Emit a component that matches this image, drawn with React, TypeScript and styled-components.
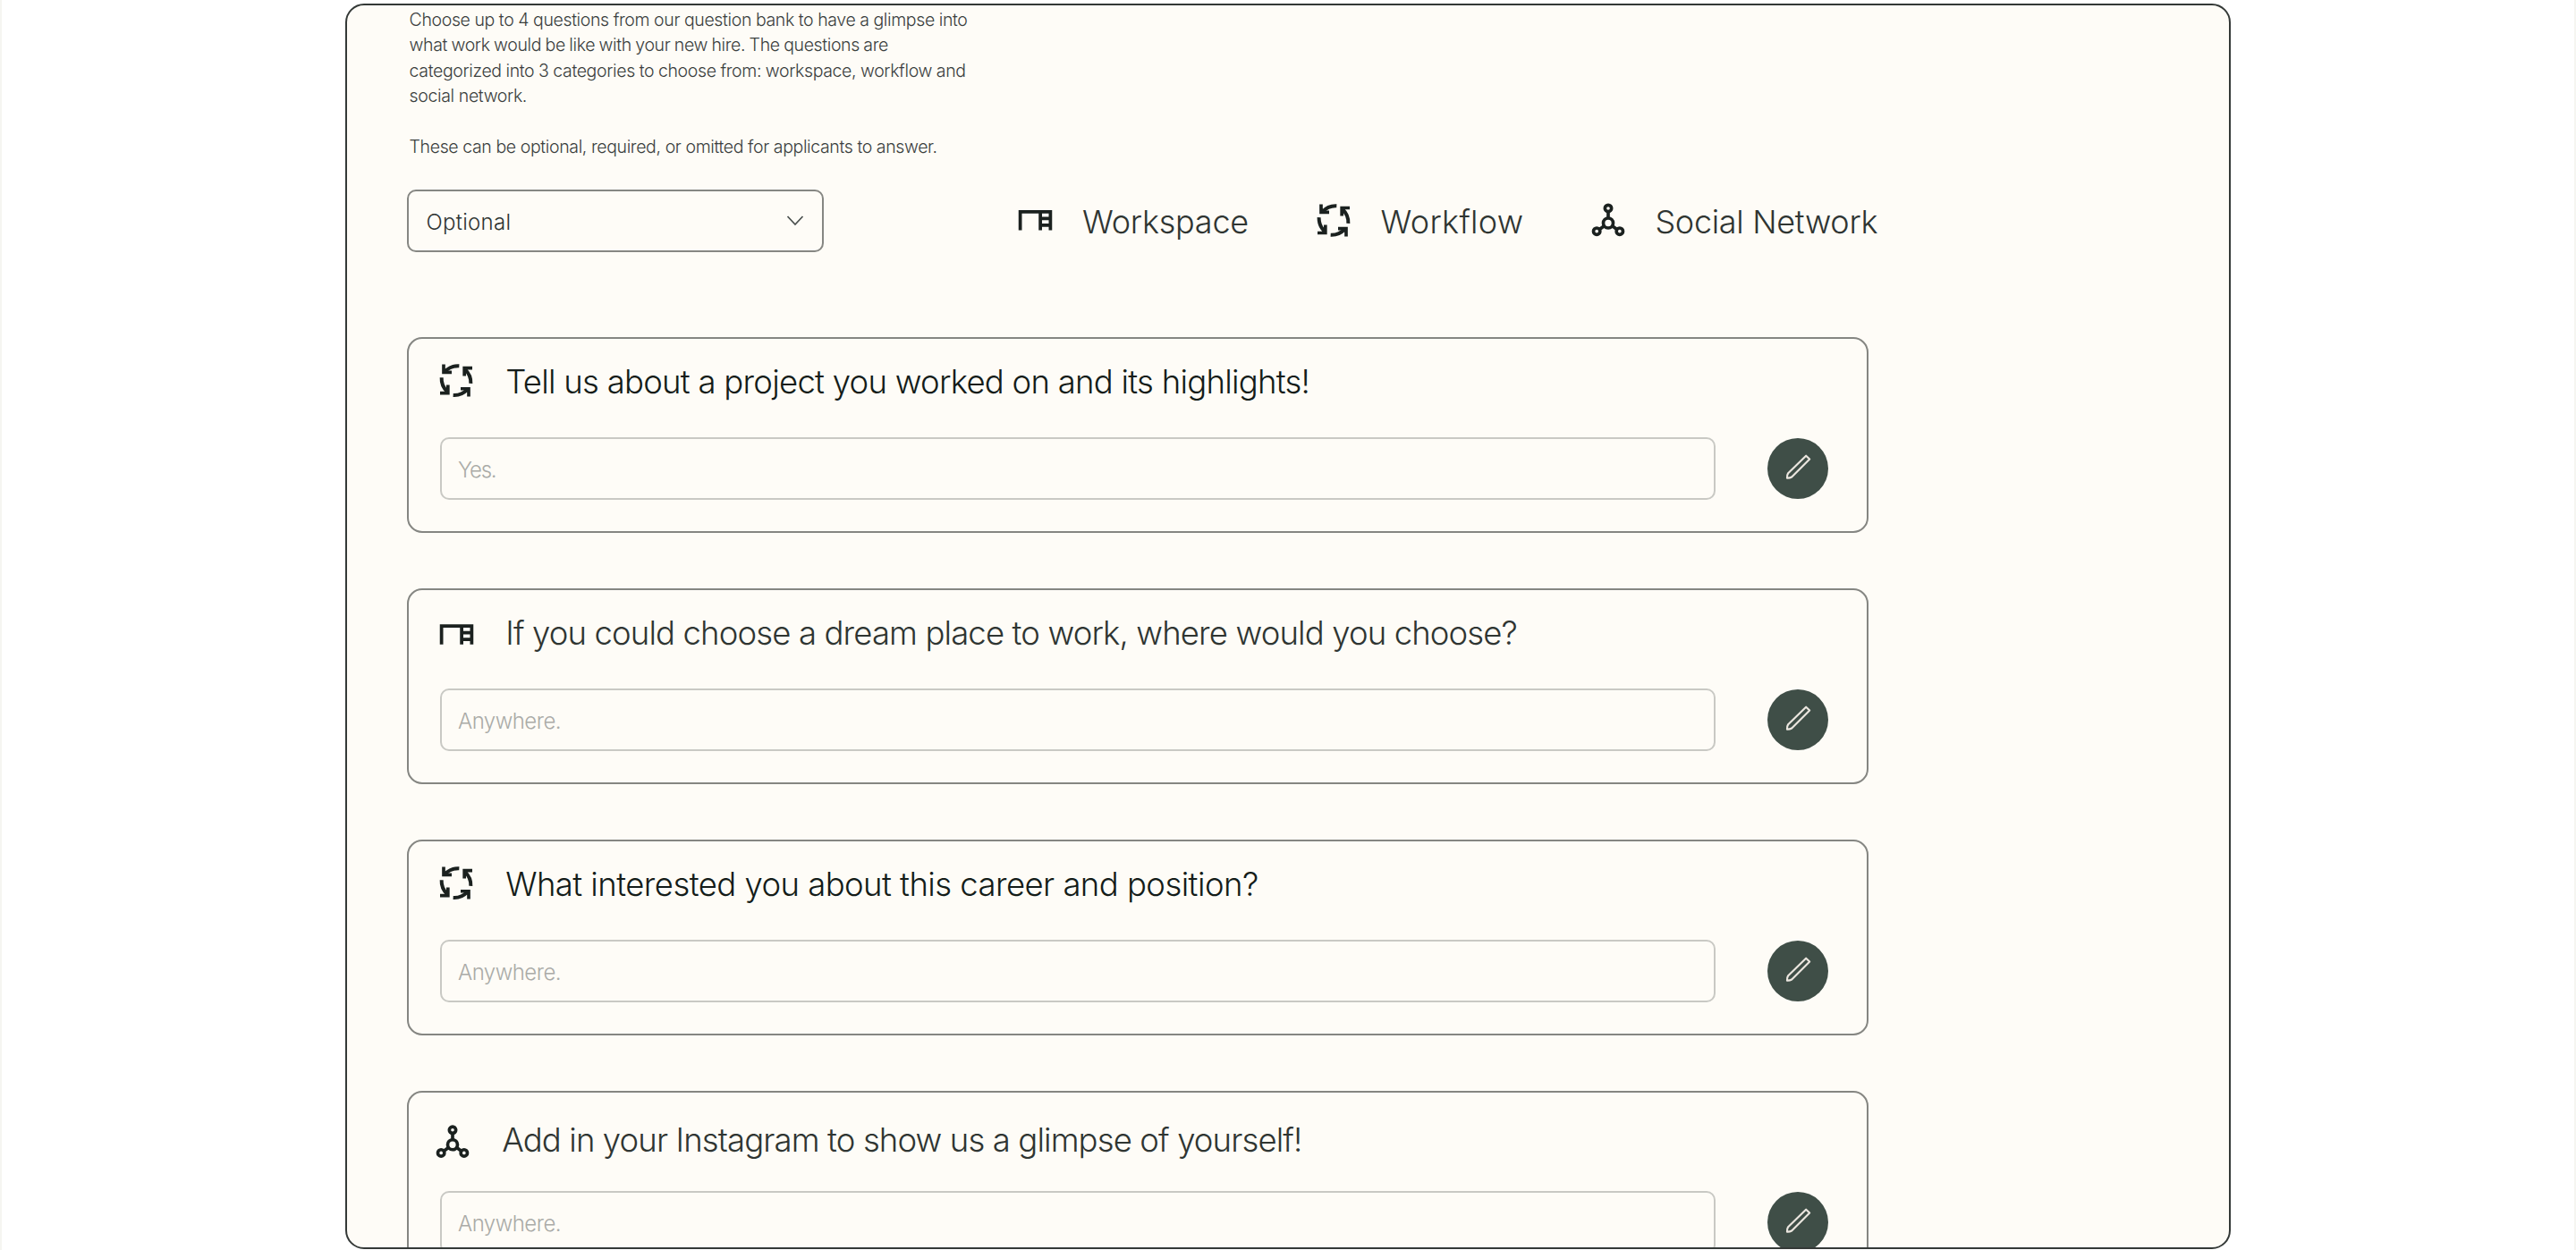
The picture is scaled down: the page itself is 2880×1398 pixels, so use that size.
import React from 'react';
import styled, { createGlobalStyle } from 'styled-components';

const Global = createGlobalStyle`
  * { box-sizing: border-box; }
  html, body { margin: 0; padding: 0; background: #fff; }
  body { overflow: hidden; font-family: Inter, 'Liberation Sans', sans-serif; font-weight: 300; color: #2f3532; }
`;

const Page = styled.div`
  height: 1398px;
  padding: 4px 384px 0 384px;
  border-left: 2px solid #f5f5f1;
  border-right: 2px solid #f5f5f1;
`;

const Frame = styled.main`
  height: 1393px;
  padding: 2px 0 0 67px;
  border: 2px solid #343937;
  border-radius: 21px;
  background: #fefcf7;
  overflow: hidden;
`;

const Intro = styled.div`
  height: 170px;
  padding-left: 2.6px;
  margin-bottom: 34px;
`;

const IntroLine = styled.p<{ $word: number }>`
  margin: 0;
  height: 28.35px;
  font-size: 19.5px;
  line-height: 28.35px;
  letter-spacing: -0.37px;
  word-spacing: ${(p) => p.$word}px;
  white-space: nowrap;
  color: #3b403e;
`;

const Toolbar = styled.div`
  display: flex;
  align-items: center;
  height: 70px;
  margin-bottom: 95px;
`;

const Select = styled.div`
  display: flex;
  align-items: center;
  justify-content: space-between;
  width: 466px;
  height: 70px;
  padding: 2px 20px 0 19.5px;
  border: 2px solid #868783;
  border-radius: 10px;
  font-size: 24px;
  letter-spacing: 0.28px;
`;

const Legend = styled.div`
  display: grid;
  grid-template-columns: 334.3px 306.8px auto;
  margin-left: 213px;
`;

const LegendItem = styled.div<{ $gap: number }>`
  display: flex;
  align-items: center;
  gap: ${(p) => p.$gap}px;
`;

const LegendLabel = styled.span<{ $track: number }>`
  padding-top: 1px;
  font-size: 36px;
  line-height: 44px;
  letter-spacing: ${(p) => p.$track}px;
  white-space: nowrap;
`;

const IconSvg = styled.svg<{ $size: number; $shift: number }>`
  flex: none;
  width: ${(p) => p.$size}px;
  height: ${(p) => p.$size}px;
  margin: ${(p) => (46 - p.$size) / 2}px;
  transform: translateY(${(p) => p.$shift}px);
`;

const Cards = styled.div`
  display: flex;
  flex-direction: column;
  gap: 62px;
  width: 1634px;
`;

const Card = styled.section`
  height: 219px;
  flex: none;
  border: 2px solid #858682;
  border-radius: 17px;
`;

const CardHead = styled.div<{ $low?: boolean }>`
  display: flex;
  align-items: flex-start;
  gap: ${(p) => (p.$low ? 32.7 : 32)}px;
  height: 110px;
  padding: ${(p) => (p.$low ? '30.4px 0 0 25.5px' : '24.7px 0 0 30.2px')};
`;

const Question = styled.h2<{ $track: number; $dark?: boolean }>`
  margin: 0;
  font-size: 36.5px;
  font-weight: 300;
  line-height: 46px;
  letter-spacing: ${(p) => p.$track}px;
  white-space: nowrap;
  color: ${(p) => (p.$dark ? '#141c19' : '#2f3532')};
`;

const CardBody = styled.div`
  display: flex;
  align-items: center;
  gap: 58px;
  padding-left: 35px;
`;

const Field = styled.div<{ $track: number }>`
  display: flex;
  align-items: center;
  width: 1426px;
  height: 70px;
  padding: 2px 0 0 18px;
  border: 2px solid #c9c9c4;
  border-radius: 10px;
  font-size: 24px;
  letter-spacing: ${(p) => p.$track}px;
  color: #aaaba7;
`;

const EditButton = styled.button`
  display: flex;
  align-items: center;
  justify-content: center;
  width: 68px;
  height: 68px;
  margin-top: -1px;
  padding: 0;
  border: 0;
  border-radius: 50%;
  background: #3f4e47;
`;

type IconProps = { shift: number };

const DeskIcon = ({ shift }: IconProps) => (
  <IconSvg $size={45} $shift={shift} viewBox="0 0 24 24" fill="#1b211f">
    <path d="M2 6v12h2V8h10v10h2v-2h4v2h2V6H2zm18 2v2h-4V8h4zm-4 6v-2h4v2h-4z" />
  </IconSvg>
);

const FlowIcon = ({ shift }: IconProps) => (
  <IconSvg $size={46} $shift={shift} viewBox="23 21 138 138" fill="none" stroke="#1b211f">
    {[0, 90, 180, 270].map((a) => (
      <g key={a} transform={`rotate(${a} 92 90)`}>
        <path d="M102 41C82 40 67 47 54 61" strokeWidth="12" />
        <path d="M50 36V62.500H77" strokeWidth="11" />
        <path d="M50 46V64H68Z" fill="#1b211f" stroke="none" />
      </g>
    ))}
  </IconSvg>
);

const SocialIcon = ({ shift }: IconProps) => (
  <IconSvg $size={44} $shift={shift} viewBox="0 0 24 24" fill="none" stroke="#1b211f" strokeWidth="2">
    <circle cx="12" cy="5" r="2" />
    <circle cx="5" cy="19" r="2" />
    <circle cx="19" cy="19" r="2" />
    <circle cx="12" cy="14" r="3" />
    <path d="M12 7v4M6.700 17.800l2.800-2M17.300 17.800l-2.800-2" />
  </IconSvg>
);

const Chevron = () => (
  <svg width="20" height="14" viewBox="0 0 20 14" fill="none" stroke="#4a504e" strokeWidth="1.700">
    <path d="M1.500 1L10 10L18.500 1" />
  </svg>
);

const Pencil = () => (
  <svg width="30.670" height="30.670" viewBox="583.500 444.500 92 92" fill="none" stroke="#ebe6df" strokeWidth="6.500" strokeLinejoin="round">
    <path d="M656 449.500L668 461L608 521Q601 525 592.500 524.500Q591.500 515 596 508Z" />
  </svg>
);

const introLines = [
  { text: 'Choose up to 4 questions from our question bank to have a glimpse into', word: -0.2 },
  { text: 'what work would be like with your new hire. The questions are', word: -0.65 },
  { text: 'categorized into 3 categories to choose from: workspace, workflow and', word: -0.3 },
  { text: 'social network.', word: 0 },
  { text: '', word: 0 },
  { text: 'These can be optional, required, or omitted for applicants to answer.', word: -0.1 },
];

const cards = [
  { icon: <FlowIcon shift={-1.4} />, text: 'Tell us about a project you worked on and its highlights!', track: -0.746, dark: true, answer: 'Yes.', answerTrack: -1.2 },
  { icon: <DeskIcon shift={2} />, text: 'If you could choose a dream place to work, where would you choose?', track: -0.87, answer: 'Anywhere.', answerTrack: -0.52 },
  { icon: <FlowIcon shift={-1.4} />, text: 'What interested you about this career and position?', track: -0.561, dark: true, answer: 'Anywhere.', answerTrack: -0.52 },
  { icon: <SocialIcon shift={1.6} />, text: 'Add in your Instagram to show us a glimpse of yourself!', track: -0.884, low: true, answer: 'Anywhere.', answerTrack: -0.52 },
];

export default function App() {
  return (
    <>
      <Global />
      <Page>
        <Frame>
          <Intro>
            {introLines.map((l, i) => (
              <IntroLine key={i} $word={l.word}>{l.text}</IntroLine>
            ))}
          </Intro>
          <Toolbar>
            <Select>
              Optional
              <Chevron />
            </Select>
            <Legend>
              <LegendItem $gap={30}>
                <DeskIcon shift={-1.2} />
                <LegendLabel $track={-0.23}>Workspace</LegendLabel>
              </LegendItem>
              <LegendItem $gap={29.2}>
                <FlowIcon shift={-0.5} />
                <LegendLabel $track={0.32}>Workflow</LegendLabel>
              </LegendItem>
              <LegendItem $gap={29.3}>
                <SocialIcon shift={-1.2} />
                <LegendLabel $track={-0.3}>Social Network</LegendLabel>
              </LegendItem>
            </Legend>
          </Toolbar>
          <Cards>
            {cards.map((c) => (
              <Card key={c.text}>
                <CardHead $low={c.low}>
                  {c.icon}
                  <Question $track={c.track} $dark={c.dark}>{c.text}</Question>
                </CardHead>
                <CardBody>
                  <Field $track={c.answerTrack}>{c.answer}</Field>
                  <EditButton aria-label="Edit">
                    <Pencil />
                  </EditButton>
                </CardBody>
              </Card>
            ))}
          </Cards>
        </Frame>
      </Page>
    </>
  );
}
